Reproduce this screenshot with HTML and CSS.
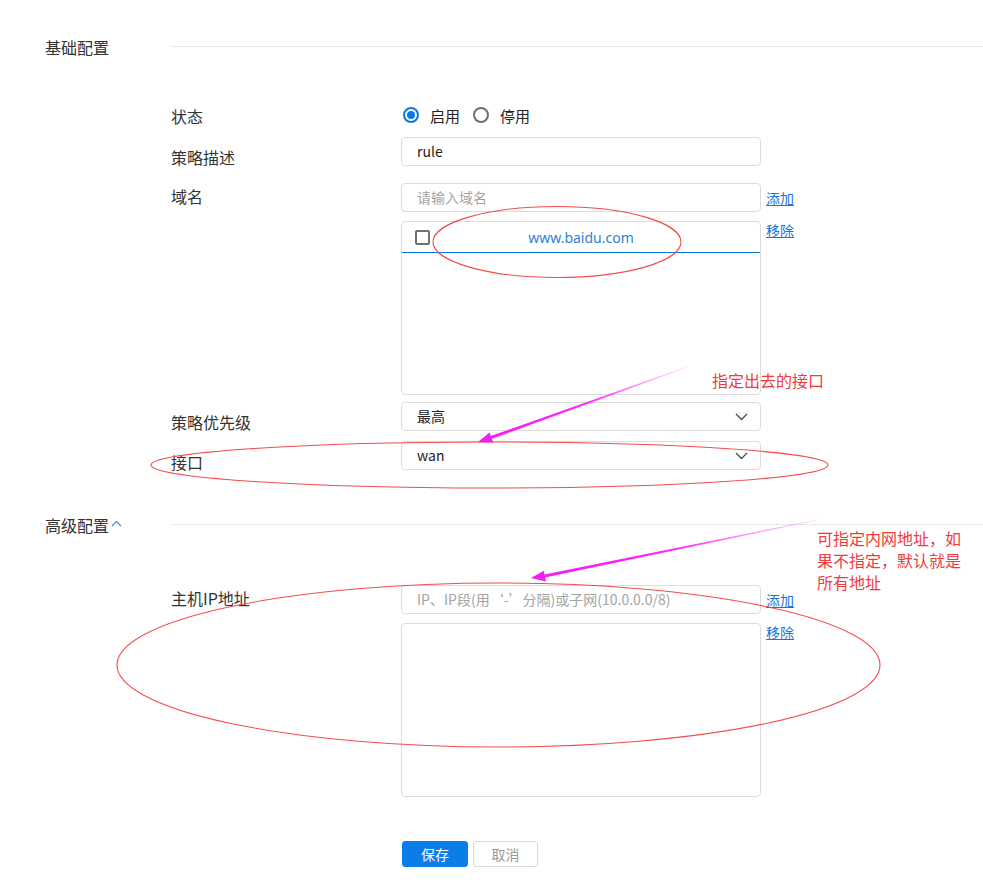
FILE: index.html
```html
<!DOCTYPE html>
<html lang="zh-CN">
  <head>
    <meta charset="UTF-8" />
    <meta name="viewport" content="width=device-width, initial-scale=1.0" />
    <title>策略配置</title>
    <link rel="stylesheet" href="styles.css">
  </head>
  <body>
    <div class="page">
      <section class="group">
        <div class="group-head">
          <h2>基础配置</h2>
          <span class="head-line"></span>
        </div>

        <div class="form form-basic">
          <div class="row row-status">
            <label class="row-label">状态</label>
            <div class="radios">
              <span class="radio checked"></span><span class="radio-text">启用</span>
              <span class="radio"></span><span class="radio-text">停用</span>
            </div>
          </div>

          <div class="row row-line row-desc">
            <label class="row-label lbl-low">策略描述</label>
            <div class="input">rule</div>
          </div>

          <div class="row row-domain">
            <label class="row-label lbl-top">域名</label>
            <div class="field-stack">
              <div class="input placeholder">请输入域名</div>
              <div class="list">
                <div class="list-item">
                  <span class="checkbox"></span>
                  <span class="item-text">www.baidu.com</span>
                </div>
              </div>
            </div>
            <div class="links">
              <a href="#">添加</a>
              <a href="#">移除</a>
            </div>
          </div>

          <div class="row row-line row-priority">
            <label class="row-label lbl-low">策略优先级</label>
            <div class="input select">
              <span>最高</span>
              <svg class="caret" width="13" height="8" viewBox="0 0 13 8"><path d="M1 1l5.5 5.5L12 1" fill="none" stroke="#4a4f57" stroke-width="1.4"/></svg>
            </div>
          </div>

          <div class="row row-line row-iface">
            <label class="row-label lbl-lower">接口</label>
            <div class="input select">
              <span>wan</span>
              <svg class="caret" width="13" height="8" viewBox="0 0 13 8"><path d="M1 1l5.5 5.5L12 1" fill="none" stroke="#4a4f57" stroke-width="1.4"/></svg>
            </div>
          </div>
        </div>
      </section>

      <section class="group group-adv">
        <div class="group-head">
          <h2>高级配置<svg class="fold" width="11" height="7" viewBox="0 0 11 7"><path d="M1 6l4.5-4.5L10 6" fill="none" stroke="#3b8fe0" stroke-width="1.2"/></svg></h2>
          <span class="head-line"></span>
        </div>

        <div class="form form-adv">
          <div class="row row-host">
            <label class="row-label lbl-top">主机IP地址</label>
            <div class="field-stack">
              <div class="input placeholder">IP、IP段(用‘-’分隔)或子网(10.0.0.0/8)</div>
              <div class="list"></div>
            </div>
            <div class="links">
              <a href="#">添加</a>
              <a href="#">移除</a>
            </div>
          </div>
        </div>
      </section>

      <div class="actions">
        <button class="btn btn-primary">保存</button>
        <button class="btn btn-default">取消</button>
      </div>

      <!-- 标注层 -->
      <svg class="marks" width="983" height="886" viewBox="0 0 983 886">
        <defs>
          <linearGradient id="fade1" gradientUnits="userSpaceOnUse" x1="687" y1="367" x2="478" y2="442">
            <stop offset="0" stop-color="#ff00ff" stop-opacity="0.1"/>
            <stop offset="0.5" stop-color="#ff00ff" stop-opacity="0.85"/>
            <stop offset="1" stop-color="#f01ff0"/>
          </linearGradient>
          <linearGradient id="fade2" gradientUnits="userSpaceOnUse" x1="816" y1="520" x2="531" y2="578">
            <stop offset="0" stop-color="#ff00ff" stop-opacity="0.1"/>
            <stop offset="0.5" stop-color="#ff00ff" stop-opacity="0.85"/>
            <stop offset="1" stop-color="#f01ff0"/>
          </linearGradient>
        </defs>
        <g fill="none" stroke="#f23a3a" stroke-width="1.1" opacity="0.9">
          <ellipse cx="557" cy="242" rx="124" ry="35.5"/>
          <ellipse cx="489.5" cy="465" rx="338.5" ry="23"/>
          <ellipse cx="498.5" cy="665" rx="381.5" ry="82"/>
        </g>
        <polygon fill="url(#fade1)" points="687,366.6 687.2,367.4 491.6,439 490.6,436.1"/>
        <polygon fill="#f01ff0" points="478,442 493.2,442.6 489.6,432.4"/>
        <polygon fill="url(#fade2)" points="816.6,519.6 816.8,520.4 545,577.4 544.4,574.4"/>
        <polygon fill="#f01ff0" points="531,578 546,581.4 543.8,570.8"/>
      </svg>
      <div class="note note-iface">指定出去的接口</div>
      <div class="note note-host">可指定内网地址，如<br>果不指定，默认就是<br>所有地址</div>
    </div>
  </body>
</html>
```

FILE: styles.css
```css
* {
  box-sizing: border-box;
}

body {
  margin: 0;
  background: #fff;
  color: #333;
  font-family: "Microsoft YaHei", "Noto Sans CJK SC", "Noto Sans", sans-serif;
}

.page {
  position: relative;
  width: 983px;
  height: 886px;
  padding-top: 36px;
}

.group-head {
  display: flex;
  align-items: center;
  height: 22px;
}

.group-head h2 {
  flex: 0 0 171px;
  margin: 0;
  padding-left: 45px;
  font-size: 16px;
  font-weight: normal;
  line-height: 22px;
  color: #333;
  display: flex;
  align-items: center;
}

.group-head .fold {
  margin-left: 2px;
  margin-top: -3px;
}

.head-line {
  flex: 1;
  height: 1px;
  background: #e6e6e6;
  margin-top: -2px;
}

.group-adv {
  margin-top: 44px;
}

.form {
  margin-left: 171px;
}

.form-basic {
  margin-top: 42px;
}

.form-adv {
  margin-top: 49px;
}

.row {
  display: flex;
  align-items: flex-start;
}

/* 单行控件的行，高度以输入框为准 */
.row-line {
  height: 29px;
}

.row-label {
  flex: 0 0 230px;
  font-size: 16px;
  line-height: 22px;
  color: #333;
}

.lbl-low {
  padding-top: 9px;
}

.lbl-lower {
  padding-top: 10px;
}

.lbl-top {
  padding-top: 2px;
}

.row-status {
  height: 30px;
  align-items: center;
}

.row-status .row-label {
  padding-top: 1px;
}

.row-desc {
  margin-top: 7px;
}

.row-domain {
  margin-top: 17px;
}

.row-priority {
  margin-top: 7px;
}

.row-iface {
  margin-top: 10px;
}

/* radio */
.radios {
  display: flex;
  align-items: center;
  padding-left: 2px;
}

.radio {
  width: 16px;
  height: 16px;
  border: 2px solid #6f6f6f;
  border-radius: 50%;
  display: inline-block;
  position: relative;
}

.radio.checked {
  border-color: #0a78e0;
}

.radio.checked::after {
  content: "";
  position: absolute;
  left: 2px;
  top: 2px;
  width: 8px;
  height: 8px;
  border-radius: 50%;
  background: #0a78e0;
}

.radio-text {
  font-size: 15px;
  margin: 0 13px 0 11px;
  color: #222;
}

/* 输入框 */
.input {
  width: 360px;
  height: 29px;
  border: 1px solid #dcdcdc;
  border-radius: 4px;
  padding: 0 15px;
  font-size: 14px;
  line-height: 27px;
  color: #222;
}

.placeholder {
  color: #a3a3a3;
}

.select {
  display: flex;
  align-items: center;
  justify-content: space-between;
  padding-right: 12px;
}

.caret {
  margin-top: 1px;
}

.field-stack {
  display: flex;
  flex-direction: column;
  gap: 9px;
}

.list {
  width: 360px;
  height: 174px;
  border: 1px solid #dcdcdc;
  border-radius: 4px;
}

.list-item {
  position: relative;
  height: 31px;
  border-bottom: 1px solid #0a78e0;
  display: flex;
  align-items: center;
  justify-content: center;
}

.checkbox {
  position: absolute;
  left: 13px;
  top: 8px;
  width: 15px;
  height: 15px;
  border: 2px solid #707070;
  border-radius: 2px;
}

.item-text {
  font-size: 14px;
  color: #2f7fd6;
  font-family: "Noto Sans", "Open Sans", sans-serif;
}

.links {
  display: flex;
  flex-direction: column;
  gap: 10px;
  padding-top: 4px;
  margin-left: 5px;
}

.links a {
  font-size: 14px;
  line-height: 22px;
  color: #1a73d9;
  text-decoration: underline;
}

/* 按钮 */
.actions {
  display: flex;
  gap: 5px;
  margin-left: 402px;
  margin-top: 44px;
}

.btn {
  height: 26px;
  border-radius: 3px;
  font-size: 14px;
  font-family: inherit;
  padding: 0;
  cursor: pointer;
}

.btn-primary {
  width: 66px;
  background: #0a7ee6;
  border: 1px solid #0a7ee6;
  color: #fff;
}

.btn-default {
  width: 65px;
  background: #fff;
  border: 1px solid #d9d9d9;
  color: #999;
}

/* 标注 */
.marks {
  position: absolute;
  left: 0;
  top: 0;
  pointer-events: none;
}

.note {
  position: absolute;
  font-size: 16px;
  line-height: 22px;
  color: #f23a3a;
}

.note-iface {
  left: 712px;
  top: 369px;
}

.note-host {
  left: 817px;
  top: 527px;
}
```
